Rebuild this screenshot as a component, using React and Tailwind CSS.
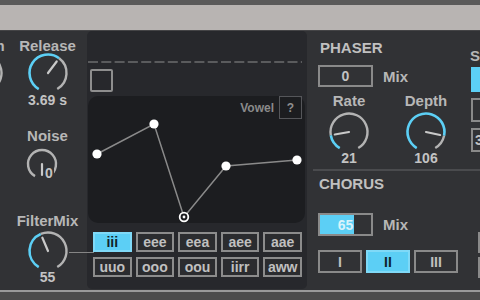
import React from 'react'

const CYAN = '#5ccff5'

// point on a circle, angle measured clockwise from 12 o'clock
const pt = (cx, cy, r, a) => [
  cx + r * Math.sin((a * Math.PI) / 180),
  cy - r * Math.cos((a * Math.PI) / 180),
]

const arc = (cx, cy, r, a1, a2) => {
  const [x1, y1] = pt(cx, cy, r, a1)
  const [x2, y2] = pt(cx, cy, r, a2)
  return `M ${x1} ${y1} A ${r} ${r} 0 ${a2 - a1 > 180 ? 1 : 0} 1 ${x2} ${y2}`
}

const Dial = ({ size = 42, r = 18.5, angle, active = true, className = '' }) => {
  const c = size / 2
  const [nx, ny] = pt(c, c, r * 0.78, angle)
  return (
    <svg width={size} height={size} className={`block overflow-visible ${className}`}>
      {active && angle > -150 && (
        <path d={arc(c, c, r, -150, angle)} stroke={CYAN} strokeWidth="2.6" fill="none" />
      )}
      <path
        d={active ? arc(c, c, r, angle, 150) : arc(c, c, r, -150, 150)}
        stroke="#b3b3b3"
        strokeWidth="2.4"
        fill="none"
      />
      <line x1={c} y1={c} x2={nx} y2={ny} stroke="#c9c9c9" strokeWidth="2.2" strokeLinecap="round" />
    </svg>
  )
}

const vowels = ['iii', 'eee', 'eea', 'aee', 'aae', 'uuo', 'ooo', 'oou', 'iirr', 'aww']
const points = [
  [9, 35],
  [66, 5],
  [96, 98],
  [138, 47],
  [209, 41],
]

const App = () => {
  return (
    <div className="w-[480px] h-[300px] overflow-hidden flex flex-col bg-[#313235] font-['Liberation_Sans',Arial,sans-serif] font-bold">
      <div className="h-[5px] bg-[#5a5a5a]" />
      <div className="h-[25px] bg-[#b8b4b2]" />
      <div className="h-px bg-[#444446]" />

      <div className="h-[259px] flex">
        {/* cut-off column on the far left */}
        <div className="w-[34px] -ml-[29px] shrink-0 flex flex-col items-center pt-[7px]">
          <div className="text-[15px] leading-[15px] text-[#b7b7b7]">Gain</div>
          <Dial angle={-20} className="-mt-[1px] -ml-[10px]" />
        </div>

        {/* envelope / noise / filter mix */}
        <div className="w-[82px] shrink-0 flex flex-col items-center pl-[3px] pt-[7px]">
          <div className="text-[15px] leading-[15px] text-[#b7b7b7]">Release</div>
          <Dial angle={37} className="-mt-[1px]" />
          <div className="text-[14px] leading-[14px] text-[#c3c3c3] -mt-[1px]">3.69 s</div>

          <div className="text-[15px] leading-[15px] text-[#b7b7b7] mt-[21px]">Noise</div>
          <div className="flex items-end mt-[5px] self-start ml-[18px]">
            <Dial size={32} r={14} angle={180} active={false} />
            <div className="text-[14px] leading-[14px] text-[#c3c3c3] -ml-[13px] bg-[#313235] pr-[1px]">0</div>
          </div>

          <div className="text-[15px] leading-[15px] text-[#b7b7b7] mt-[33px]">FilterMix</div>
          <div className="relative mt-[2px]">
            <Dial angle={-23} />
            <div className="absolute left-full top-[22px] w-[25px] h-px bg-[#858585]" />
          </div>
          <div className="text-[14px] leading-[14px] text-[#c3c3c3] -mt-[2px]">55</div>
        </div>

        {/* vowel pad */}
        <div className="w-[220px] shrink-0 bg-[#27282c] rounded-[5px] mb-[1px] flex flex-col">
          <div className="h-[30px]" />
          <svg width="214" height="2" className="block ml-[1px]">
            <line x1="0" y1="1" x2="214" y2="1" stroke="#6c6c6e" strokeWidth="1.6" strokeDasharray="10 3.3" />
          </svg>
          <div className="w-[23px] h-[23px] mt-[6px] ml-[3px] border-2 border-[#8e8e8e] rounded-[2px]" />

          <div className="w-[217px] h-[127px] mt-[4px] ml-[1px] bg-[#1c1d20] rounded-[10px] flex flex-col">
            <div className="flex justify-end items-center pr-[3px] gap-[5px]">
              <div className="text-[12px] leading-[12px] text-[#8a8a8a]">Vowel</div>
              <div className="w-[23px] h-[23px] border-[1.5px] border-[#55565a] flex items-center justify-center text-[12px] text-[#8f8f8f]">
                ?
              </div>
            </div>
            <svg width="217" height="104" className="block overflow-visible">
              <polyline
                points={points.map(p => p.join(',')).join(' ')}
                fill="none"
                stroke="#8a8a8a"
                strokeWidth="1.5"
              />
              {points.map(([x, y], i) =>
                i === 2 ? (
                  <g key={i}>
                    <circle cx={x} cy={y} r="4.3" fill="#1c1d20" stroke="#ffffff" strokeWidth="1.8" />
                    <circle cx={x} cy={y} r="1.4" fill="#ffffff" />
                  </g>
                ) : (
                  <circle key={i} cx={x} cy={y} r="4.6" fill="#ffffff" />
                )
              )}
            </svg>
          </div>

          <div className="grid grid-cols-5 gap-x-[4px] gap-y-[5px] mt-[9px] ml-[6px] mr-[5px]">
            {vowels.map((v, i) => (
              <div
                key={v}
                className={`h-[20px] border-2 flex items-center justify-center text-[14px] leading-[14px] ${
                  i === 0
                    ? 'bg-[#5ccff5] border-[#7fd9f7] text-[#10242b]'
                    : 'bg-[#2b2c2f] border-[#8c8c8c] text-[#c0c0c0]'
                }`}
              >
                {v}
              </div>
            ))}
          </div>
        </div>

        {/* phaser / chorus */}
        <div className="flex-1 flex flex-col">
          <div className="flex">
            <div className="w-[163px] shrink-0 pl-[11px] pt-[9px] flex flex-col">
              <div className="text-[15px] leading-[15px] text-[#c0c0c0] pl-[2px]">PHASER</div>
              <div className="flex items-center mt-[10px]">
                <div className="w-[55px] h-[22px] border-2 border-[#8a8a8a] flex items-center justify-center text-[14px] leading-[14px] text-[#c3c3c3]">
                  0
                </div>
                <div className="ml-[10px] text-[15px] leading-[15px] text-[#b7b7b7]">Mix</div>
              </div>
              <div className="flex mt-[6px] ml-[1px]">
                <div className="w-[60px] flex flex-col items-center">
                  <div className="text-[15px] leading-[15px] text-[#b7b7b7]">Rate</div>
                  <Dial angle={-100} className="mt-[3px]" />
                  <div className="text-[14px] leading-[14px] text-[#c3c3c3] -mt-[2px]">21</div>
                </div>
                <div className="w-[60px] ml-[17px] flex flex-col items-center">
                  <div className="text-[15px] leading-[15px] text-[#b7b7b7]">Depth</div>
                  <Dial angle={102} className="mt-[3px]" />
                  <div className="text-[14px] leading-[14px] text-[#c3c3c3] -mt-[2px]">106</div>
                </div>
              </div>
            </div>
            <div className="flex-1 flex flex-col pt-[17px] ml-[1px]">
              <div className="text-[15px] leading-[15px] text-[#b7b7b7] -ml-[1px]">Sync</div>
              <div className="h-[25px] mt-[4px] bg-[#5ccff5]" />
              <div className="h-[24px] mt-[6px] border-2 border-r-0 border-[#8a8a8a]" />
              <div className="h-[24px] mt-[6px] border-2 border-r-0 border-[#8a8a8a] pl-[2px] flex items-center text-[14px] leading-[14px] text-[#c3c3c3]">
                3
              </div>
            </div>
          </div>

          <div className="h-[2px] mt-[4px] ml-[6px] bg-[#4a4b4e]" />

          <div className="flex">
            <div className="w-[163px] shrink-0 pl-[11px] pt-[5px] flex flex-col">
              <div className="text-[15px] leading-[15px] text-[#c0c0c0] pl-[1px]">CHORUS</div>
              <div className="flex items-center mt-[22px]">
                <div className="w-[55px] h-[23px] border-2 border-[#8a8a8a] bg-[linear-gradient(to_right,#5ccff5_66%,transparent_66%)] flex items-center justify-center text-[14px] leading-[14px] text-[#d9f3fb]">
                  65
                </div>
                <div className="ml-[10px] text-[15px] leading-[15px] text-[#b7b7b7]">Mix</div>
              </div>
              <div className="flex gap-[4px] mt-[14px]">
                {['I', 'II', 'III'].map((t, i) => (
                  <div
                    key={t}
                    className={`w-[44px] h-[23px] border-2 flex items-center justify-center text-[14px] leading-[14px] ${
                      i === 1
                        ? 'bg-[#5ccff5] border-[#7fd9f7] text-[#10242b]'
                        : 'border-[#8a8a8a] text-[#c0c0c0]'
                    }`}
                  >
                    {t}
                  </div>
                ))}
              </div>
            </div>
            <div className="flex-1 flex flex-col ml-[8px] mt-[61px] gap-[4px]">
              <div className="h-[21px] border-2 border-r-0 border-[#8a8a8a]" />
              <div className="h-[21px] border-2 border-r-0 border-[#8a8a8a]" />
            </div>
          </div>
        </div>
      </div>

      <div className="h-[2px] bg-[#9a9a9a]" />
      <div className="flex-1 bg-[#4c4c4c]" />
    </div>
  )
}

export default App
